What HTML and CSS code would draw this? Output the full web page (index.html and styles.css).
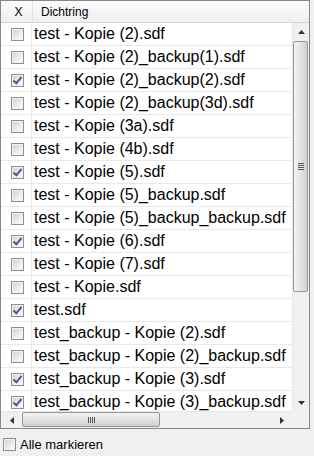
FILE: index.html
```html
<!DOCTYPE html>
<html lang="de">
<head>
    <meta charset="UTF-8">
    <title>Dichtring</title>
    <link rel="stylesheet" href="styles.css">
</head>
<body>

<div class="grid">
    <div class="head">
        <div class="hcell hcheck">X</div>
        <div class="hcell hname">Dichtring</div>
    </div>
    <div class="body">
        <div class="rows">
            <div class="row"><span class="cell"><span class="box"></span></span><span class="name">test - Kopie (2).sdf</span></div>
            <div class="row"><span class="cell"><span class="box"></span></span><span class="name">test - Kopie (2)_backup(1).sdf</span></div>
            <div class="row"><span class="cell"><span class="box on"></span></span><span class="name">test - Kopie (2)_backup(2).sdf</span></div>
            <div class="row"><span class="cell"><span class="box"></span></span><span class="name">test - Kopie (2)_backup(3d).sdf</span></div>
            <div class="row"><span class="cell"><span class="box"></span></span><span class="name">test - Kopie (3a).sdf</span></div>
            <div class="row"><span class="cell"><span class="box"></span></span><span class="name">test - Kopie (4b).sdf</span></div>
            <div class="row"><span class="cell"><span class="box on"></span></span><span class="name">test - Kopie (5).sdf</span></div>
            <div class="row"><span class="cell"><span class="box"></span></span><span class="name">test - Kopie (5)_backup.sdf</span></div>
            <div class="row"><span class="cell"><span class="box"></span></span><span class="name">test - Kopie (5)_backup_backup.sdf</span></div>
            <div class="row"><span class="cell"><span class="box on"></span></span><span class="name">test - Kopie (6).sdf</span></div>
            <div class="row"><span class="cell"><span class="box"></span></span><span class="name">test - Kopie (7).sdf</span></div>
            <div class="row"><span class="cell"><span class="box"></span></span><span class="name">test - Kopie.sdf</span></div>
            <div class="row"><span class="cell"><span class="box on"></span></span><span class="name">test.sdf</span></div>
            <div class="row"><span class="cell"><span class="box"></span></span><span class="name">test_backup - Kopie (2).sdf</span></div>
            <div class="row"><span class="cell"><span class="box"></span></span><span class="name">test_backup - Kopie (2)_backup.sdf</span></div>
            <div class="row"><span class="cell"><span class="box on"></span></span><span class="name">test_backup - Kopie (3).sdf</span></div>
            <div class="row"><span class="cell"><span class="box on"></span></span><span class="name">test_backup - Kopie (3)_backup.sdf</span></div>
        </div>
        <div class="vscroll">
            <div class="arrow"><svg width="7" height="4" viewBox="0 0 7 4"><path d="M0 4 L3.5 0 L7 4 Z" fill="#333"/></svg></div>
            <div class="vtrack"><div class="vthumb"><span class="grip-v"></span></div></div>
            <div class="arrow"><svg width="7" height="4" viewBox="0 0 7 4"><path d="M0 0 L3.5 4 L7 0 Z" fill="#333"/></svg></div>
        </div>
        <div class="hscroll">
            <div class="arrow"><svg width="4" height="7" viewBox="0 0 4 7"><path d="M4 0 L0 3.5 L4 7 Z" fill="#333"/></svg></div>
            <div class="htrack"><div class="hthumb"><span class="grip-h"></span></div></div>
            <div class="arrow"><svg width="4" height="7" viewBox="0 0 4 7"><path d="M0 0 L4 3.5 L0 7 Z" fill="#333"/></svg></div>
        </div>
        <div class="corner"></div>
    </div>
</div>

<label class="all"><span class="box"></span>Alle markieren</label>

</body>
</html>
```

FILE: styles.css
```css
body { margin: 0; background: #f0f0f0; font-family: "Liberation Sans", Arial, sans-serif; width: 314px; height: 456px; overflow: hidden; }

.grid { width: 310px; height: 429px; box-sizing: border-box; border: 1px solid #828790; background: #fff; display: flex; flex-direction: column; }
.head { height: 21px; display: flex; background: linear-gradient(#fafafa, #f0f0f0); border-bottom: 1px solid #d5d5d5; font-size: 12px; color: #000; }
.hcell { display: flex; align-items: center; padding-top: 1px; box-sizing: border-box; }
.hcheck { width: 32px; justify-content: center; padding-left: 4px; border-right: 1px solid #e0e0e0; }
.hname { padding-left: 8px; }

.body { flex: 1; display: grid; grid-template-columns: 1fr 17px; grid-template-rows: 1fr 17px; min-height: 0; }
.rows { overflow: hidden; }
.row { height: 22px; display: flex; border-bottom: 1px solid #e9e9e9; white-space: nowrap; }
.cell { width: 31px; flex: none; display: flex; align-items: center; justify-content: center; border-right: 1px solid #e9e9e9; padding-left: 3px; box-sizing: border-box; }
.name { font-size: 16px; line-height: 22px; padding-left: 2px; color: #000; }

.box { width: 13px; height: 13px; box-sizing: border-box; border: 1px solid #8e8f8f; background: linear-gradient(135deg, #cfcfcf, #f7f7f7 80%); box-shadow: inset 0 0 0 1px #f2f2f2; display: inline-block; position: relative; }
.box.on::after { content: ""; position: absolute; left: 3px; top: 0px; width: 3px; height: 7px; border: solid #4a5d94; border-width: 0 2px 2px 0; transform: rotate(40deg); }

.vscroll { background: #f0f0f0; display: flex; flex-direction: column; border-left: 1px solid #e8e8e8; }
.vscroll .arrow { height: 17px; display: flex; align-items: center; justify-content: center; }
.vtrack { flex: 1; display: flex; flex-direction: column; }
.vthumb { height: 249px; margin: 1px 1px 0 0; border: 1px solid #979797; border-radius: 2px; background: linear-gradient(90deg, #f3f3f3, #e4e4e4 50%, #d0d0d0); display: flex; align-items: center; justify-content: center; }
.grip-v { width: 6px; height: 7px; background: repeating-linear-gradient(#555 0 1px, transparent 1px 2px); }

.hscroll { background: #f0f0f0; display: flex; border-top: 1px solid #e8e8e8; }
.hscroll .arrow { width: 21px; display: flex; align-items: center; justify-content: center; }
.htrack { flex: 1; display: flex; }
.hthumb { width: 136px; margin: 0 0 1px 0; border: 1px solid #979797; border-radius: 2px; background: linear-gradient(#f3f3f3, #e4e4e4 50%, #d0d0d0); display: flex; align-items: center; justify-content: center; }
.grip-h { width: 7px; height: 6px; background: repeating-linear-gradient(90deg, #555 0 1px, transparent 1px 2px); }
.corner { background: #f0f0f0; }

.all { display: flex; align-items: center; gap: 4px; margin: 8px 0 0 3px; font-size: 13px; color: #000; }
```
